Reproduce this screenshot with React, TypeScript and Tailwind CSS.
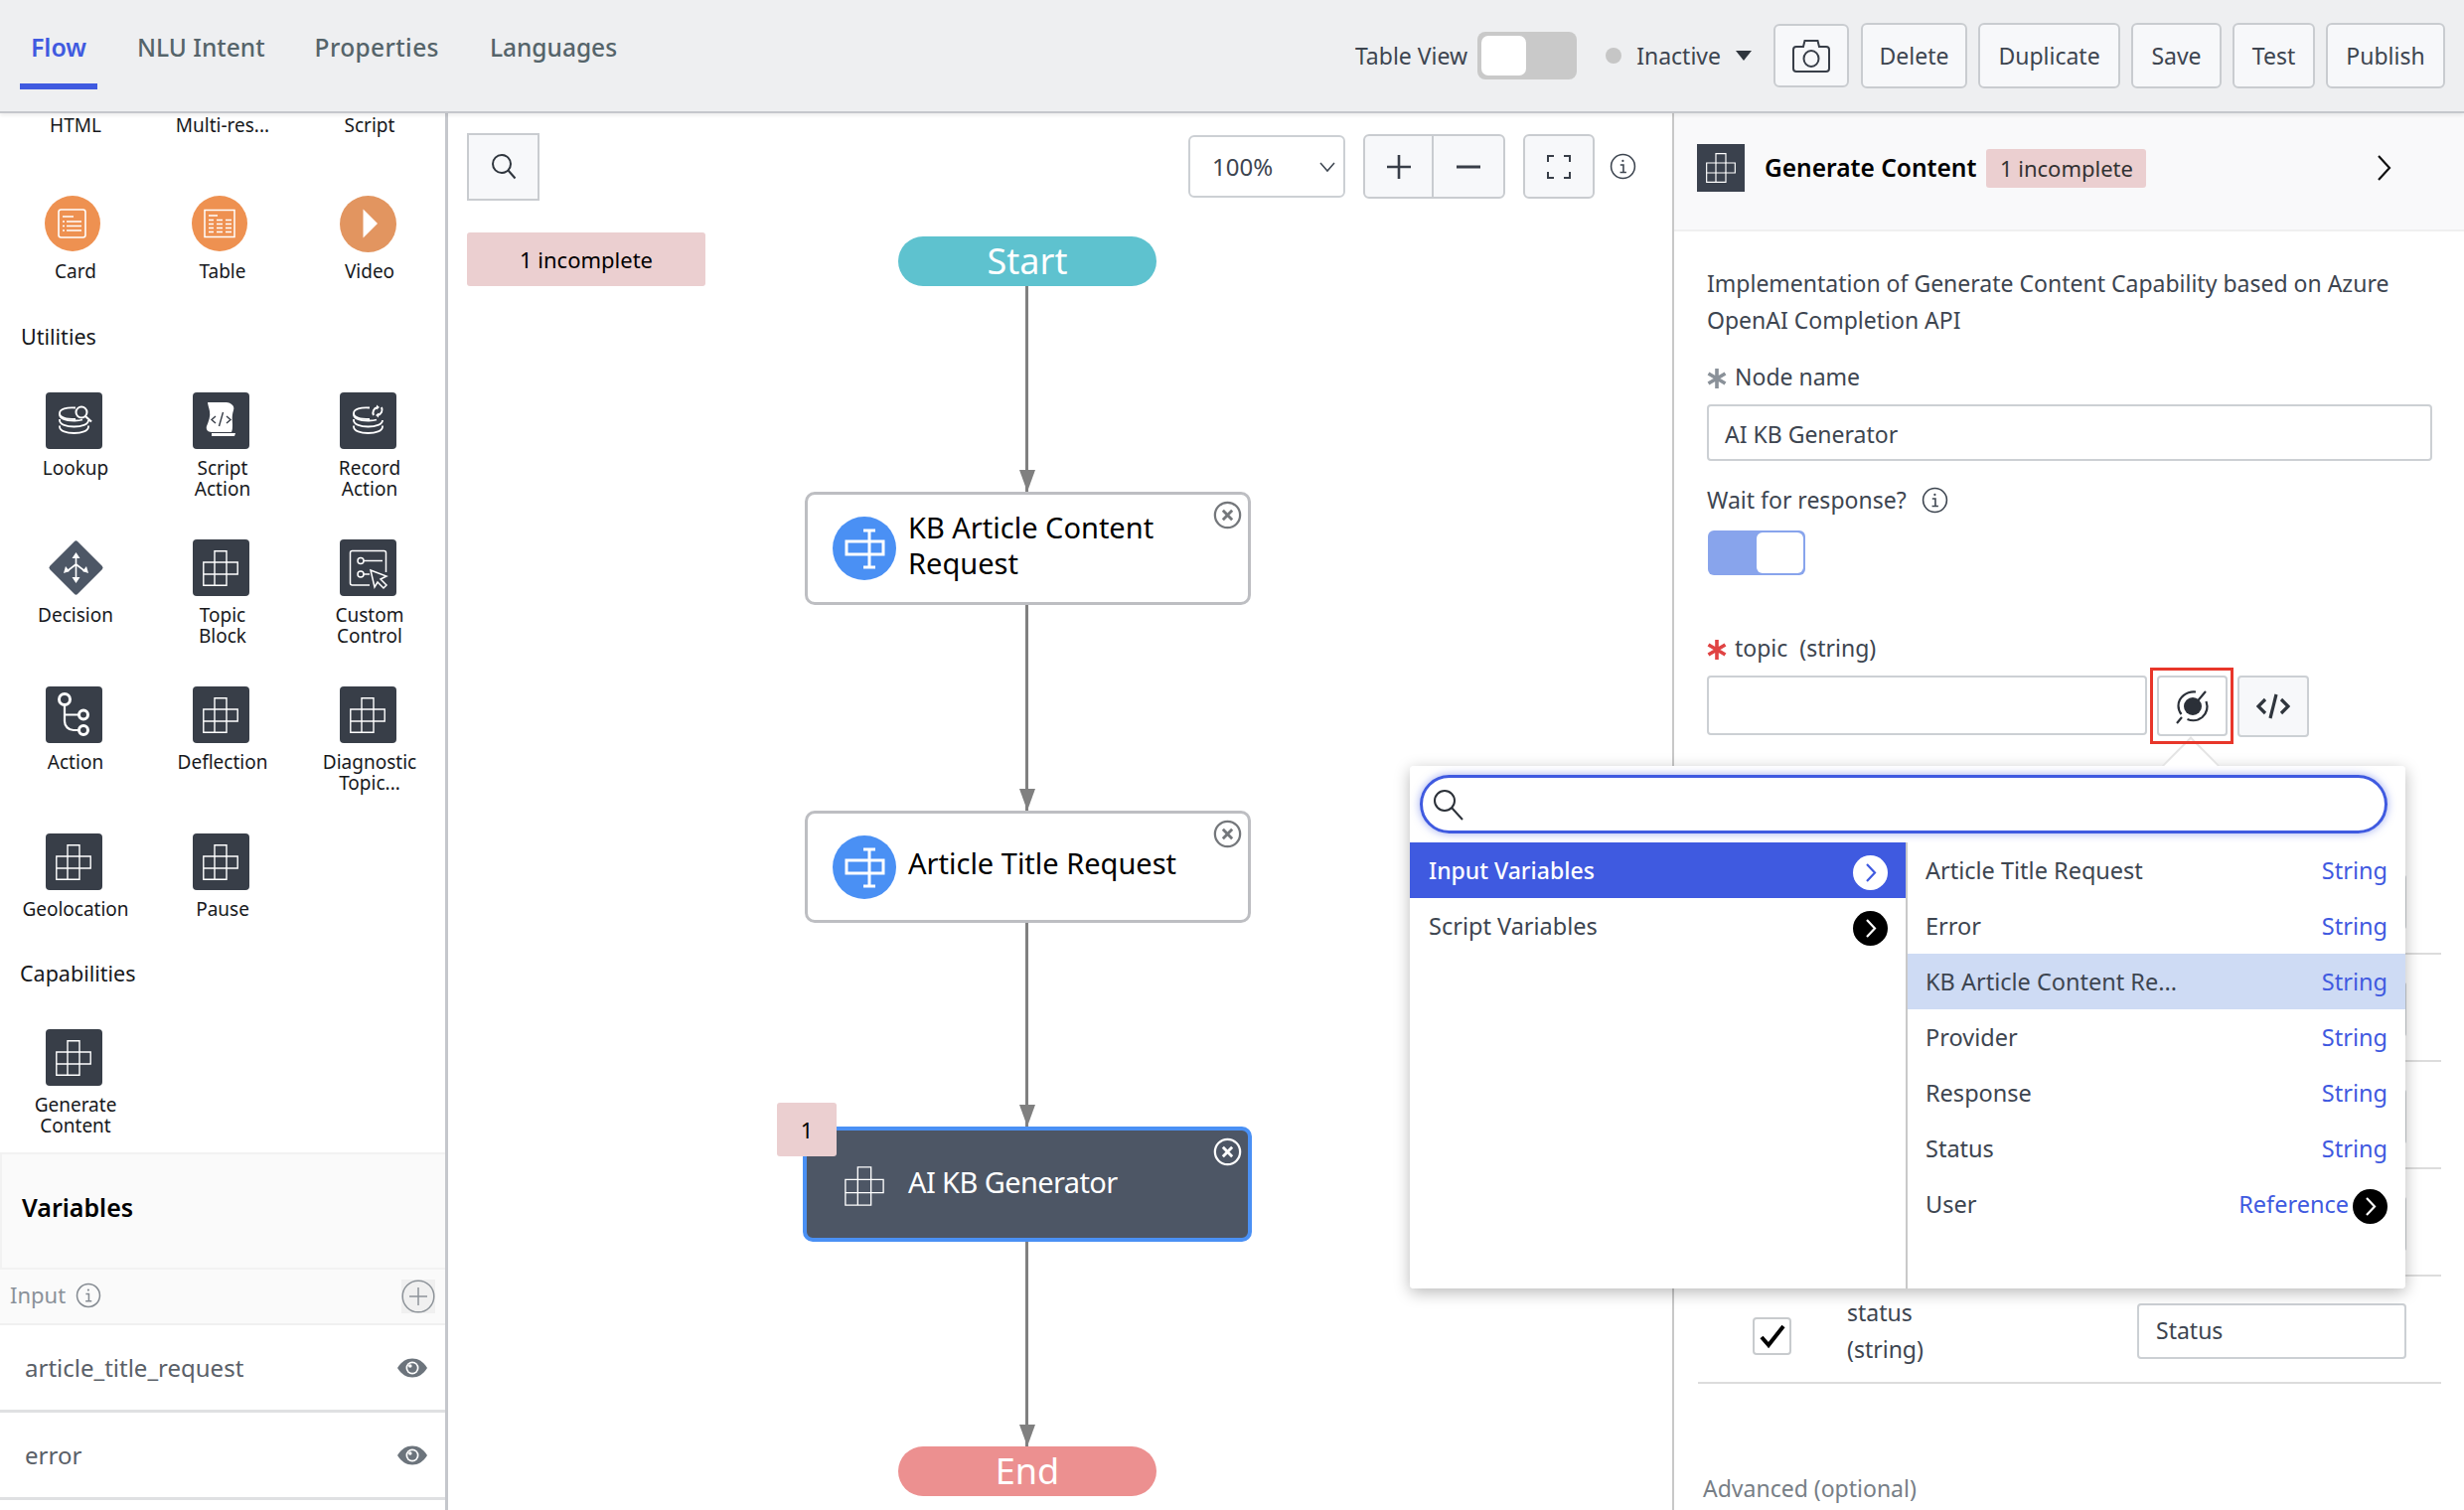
const font = { fontFamily: '"Noto Sans", sans-serif' };

function BlockGlyph({ className, sw = 1.4 }: { className: string; sw?: number }) {
  return (
    <svg viewBox="0 0 36 36" className={className} fill="none" stroke="#fff" strokeWidth={sw}>
      <path d="M12 .8h12V12h11.2v12H24v11.2H.8V12H12z" />
      <path d="M12 12h12v12M.8 24H24M12 12v23.2" />
    </svg>
  );
}

function InfoIcon({ className, color = "#3d4550" }: { className: string; color?: string }) {
  return (
    <svg viewBox="0 0 24 24" className={className} fill="none" stroke={color} strokeWidth="1.4">
      <circle cx="12" cy="12" r="10.6" />
      <path d="M9.6 10.6h2.8v6.6M9.4 17.4h5.6" />
      <circle cx="11.9" cy="7" r="1" fill={color} stroke="none" />
    </svg>
  );
}

function CloseCircle({ className, color = "#74777b" }: { className: string; color?: string }) {
  return (
    <svg viewBox="0 0 28 28" className={className} fill="none" stroke={color}>
      <circle cx="14" cy="14" r="12.2" strokeWidth="2.2" />
      <path d="M9.5 9.5l9 9M18.5 9.5l-9 9" strokeWidth="2.8" />
    </svg>
  );
}

function ChevronDot({ className, bg, fg }: { className: string; bg: string; fg: string }) {
  return (
    <svg viewBox="0 0 35 35" className={className}>
      <circle cx="17.5" cy="17.5" r="17.5" fill={bg} />
      <path d="M14 9l8 8.5-8 8.5" fill="none" stroke={fg} strokeWidth="2.2" />
    </svg>
  );
}

function Asterisk({ color }: { color: string }) {
  return (
    <svg viewBox="0 0 20 20" className="w-[20px] h-[20px] mr-[8px] mt-[4px]" fill="none" stroke={color} strokeWidth="3.6">
      <path d="M10 0v20M1.500 5l17 10M18.500 5l-17 10" />
    </svg>
  );
}

function Eye() {
  return (
    <svg viewBox="0 0 30 20" className="w-[30px] h-[20px]">
      <path d="M0 10C4 3.5 9 .5 15 .5S26 3.5 30 10c-4 6.500-9 9.500-15 9.500S4 16.500 0 10z" fill="#6c747c" />
      <circle cx="15" cy="10" r="6.500" fill="#fff" />
      <circle cx="15" cy="10" r="4.800" fill="#6c747c" />
      <circle cx="12.800" cy="8" r="1.800" fill="#fff" />
    </svg>
  );
}

function NodeGlyph() {
  return (
    <svg viewBox="0 0 64 64" className="w-[64px] h-[64px]">
      <circle cx="32" cy="32" r="32" fill="#4a90f4" />
      <g fill="none" stroke="#fff" strokeWidth="3">
        <rect x="14" y="25" width="37" height="13" />
        <path d="M37 14v37M31 14h12M31 51h12" />
      </g>
    </svg>
  );
}

function DarkBox({ children }: { children: React.ReactNode }) {
  return <div className="w-[57px] h-[57px] rounded-[4px] bg-[#383e48] flex items-center justify-center">{children}</div>;
}

function Block() {
  return (
    <DarkBox>
      <BlockGlyph className="w-[36px] h-[36px]" />
    </DarkBox>
  );
}

function CardIcon() {
  return (
    <svg viewBox="0 0 56 56" className="w-[56px] h-[56px]">
      <circle cx="28" cy="28" r="28" fill="#ee9151" />
      <g fill="none" stroke="#fff">
        <rect x="14" y="14" width="27" height="28" rx="2.500" strokeWidth="1.600" />
        <path d="M18 21h11M18 26h2M22 26h15M18 30.500h2M22 30.500h15M18 35h2M22 35h15" strokeWidth="1.300" />
      </g>
    </svg>
  );
}

function TableIcon() {
  return (
    <svg viewBox="0 0 56 56" className="w-[56px] h-[56px]">
      <circle cx="28" cy="28" r="28" fill="#ee9151" />
      <g fill="none" stroke="#fff">
        <rect x="13" y="14.500" width="30" height="27" strokeWidth="1.500" />
        <path d="M17 20h9M17 24.500h5M25 24.500h6M34 24.500h6M17 28.500h5M25 28.500h6M34 28.500h6M17 32.500h5M25 32.500h6M34 32.500h6M17 36.500h5M25 36.500h6M34 36.500h6" strokeWidth="1.300" />
      </g>
    </svg>
  );
}

function VideoIcon() {
  return (
    <svg viewBox="0 0 57 57" className="w-[57px] h-[57px]">
      <circle cx="28.500" cy="28.500" r="28.500" fill="#e29560" />
      <path d="M23.500 13.500L38 28l-14.500 14.500z" fill="#fff" />
    </svg>
  );
}

function LookupIcon() {
  return (
    <DarkBox>
      <svg viewBox="0 0 57 57" className="w-[57px] h-[57px]" fill="none" stroke="#fff" strokeWidth="1.800">
        <path d="M30 15.500c-9-.8-16 1.500-16 5.500 0 4 7 6 16 6" />
        <path d="M14 21v1c0 4.500 7 6.500 15 6.500 3 0 6-.3 8-1" />
        <path d="M14 27v1c0 4.500 7 6.500 14.500 6.500S43 32.500 43 28" />
        <path d="M14 33.500v1c0 4.500 7 6.500 14.500 6.500S43 39 43 34.500v-1" />
        <circle cx="36" cy="20" r="5.500" strokeWidth="2" />
        <path d="M40 24l6 5.500" strokeWidth="2.200" />
      </svg>
    </DarkBox>
  );
}

function ScriptIcon() {
  return (
    <DarkBox>
      <svg viewBox="0 0 57 57" className="w-[57px] h-[57px]">
        <path d="M15 10h19c3 0 9 3 7 8-2 6-1 10-1 14 0 3 0 6-1 8H19c-4 0-6-3-5-6 2-5 4-10 3-15-.5-3-2-7-2-9z" fill="#fff" />
        <path d="M19 41h24l-1 3H19z" fill="#fff" />
        <path d="M23 24l-4 3.500 4 3.500M34 24l4 3.500-4 3.500M30.500 20l-4 14" fill="none" stroke="#383e48" strokeWidth="1.400" />
      </svg>
    </DarkBox>
  );
}

function RecordIcon() {
  return (
    <DarkBox>
      <svg viewBox="0 0 57 57" className="w-[57px] h-[57px]" fill="none" stroke="#fff" strokeWidth="1.800">
        <path d="M30 15.500c-9-.8-16 1.500-16 5.500 0 4 7 6 16 6" />
        <path d="M14 21v1c0 4.500 7 6.500 15 6.500 3 0 6-.3 8-1" />
        <path d="M14 27v1c0 4.500 7 6.500 14.500 6.500S43 32.500 43 28" />
        <path d="M14 33.500v1c0 4.500 7 6.500 14.500 6.500S43 39 43 34.500v-1" />
        <path d="M34 23c-1.500-3.500 0-7 4-8M42 15c1.500 3.500 0 7-4 8" strokeWidth="2" />
        <path d="M37 12.500l3 2.500-3 2.500zM39 20.500l-3 2.500 3 2.500z" fill="#fff" stroke="none" />
      </svg>
    </DarkBox>
  );
}

function DecisionIcon() {
  return (
    <svg viewBox="0 0 57 57" className="w-[57px] h-[57px]">
      <path d="M28.500 4L53 28.500 28.500 53 4 28.500z" fill="#4d5766" stroke="#4d5766" strokeWidth="5" strokeLinejoin="round" />
      <path d="M28.500 17v23M28.500 25l-9 7M28.500 25l9 7" fill="none" stroke="#fff" strokeWidth="1.600" />
      <path d="M28.500 13l4 6h-8zM28.500 44l-4-6h8zM16 34l2-7 4 5zM41 34l-2-7-4 5z" fill="#fff" />
    </svg>
  );
}

function CustomControlIcon() {
  return (
    <DarkBox>
      <svg viewBox="0 0 57 57" className="w-[57px] h-[57px]" fill="none" stroke="#fff" strokeWidth="1.500">
        <path d="M30 46H12.500a2 2 0 0 1-2-2V13.500a2 2 0 0 1 2-2h32a2 2 0 0 1 2 2V33" />
        <circle cx="21" cy="21.500" r="3" />
        <path d="M24 21.500h19" />
        <circle cx="21" cy="35" r="3" />
        <path d="M24 35h6" />
        <path d="M31 31l16 6-6 3 6 6-3 3-6-6-3 5z" fill="#383e48" />
      </svg>
    </DarkBox>
  );
}

function ActionIcon() {
  return (
    <DarkBox>
      <svg viewBox="0 0 57 57" className="w-[57px] h-[57px]" fill="none" stroke="#fff" strokeWidth="2.200">
        <circle cx="19" cy="13" r="5.500" strokeWidth="3" />
        <circle cx="38" cy="28.500" r="4.500" strokeWidth="3" />
        <circle cx="38" cy="44" r="4.500" strokeWidth="3" />
        <path d="M19 19v16c0 5 4 9 9 9h5M19 28.500h14" />
      </svg>
    </DarkBox>
  );
}

function PaletteItem({ icon, label, iconClass = "mr-[4px]" }: { icon: React.ReactNode; label: string; iconClass?: string }) {
  return (
    <div className="flex flex-col items-center">
      <div className={iconClass}>{icon}</div>
      <div className="mt-[9px] w-[148px] text-center text-[19px] leading-[21px] text-[#16181b] whitespace-pre-line">{label}</div>
    </div>
  );
}

function LeftPanel() {
  return (
    <div className="w-[451px] h-full shrink-0 border-r-[3px] border-[#c5c7cc] flex flex-col overflow-hidden">
      <div className="pl-[2px] h-[83px] pt-[2px] grid grid-cols-[148px_148px_148px] text-center text-[19px] leading-[21px] text-[#16181b]">
        <div>HTML</div>
        <div>Multi-res...</div>
        <div>Script</div>
      </div>
      <div className="pl-[2px] h-[126px] grid grid-cols-[148px_148px_148px]">
        <PaletteItem icon={<CardIcon />} label="Card" iconClass="mr-[6px] h-[57px]" />
        <PaletteItem icon={<TableIcon />} label="Table" iconClass="mr-[7px] h-[57px]" />
        <PaletteItem icon={<VideoIcon />} label="Video" />
      </div>
      <div className="h-[32px] mb-[40px] pl-[21px] text-[21.500px] leading-[32px] text-[#16181b]">Utilities</div>
      <div className="pl-[2px] grid grid-cols-[148px_148px_148px] grid-rows-[148px_148px_148px_125px]">
        <PaletteItem icon={<LookupIcon />} label="Lookup" />
        <PaletteItem icon={<ScriptIcon />} label={"Script\nAction"} />
        <PaletteItem icon={<RecordIcon />} label={"Record\nAction"} />
        <PaletteItem icon={<DecisionIcon />} label="Decision" iconClass="mr-0 h-[57px]" />
        <PaletteItem icon={<Block />} label={"Topic\nBlock"} />
        <PaletteItem icon={<CustomControlIcon />} label={"Custom\nControl"} />
        <PaletteItem icon={<ActionIcon />} label="Action" />
        <PaletteItem icon={<Block />} label="Deflection" />
        <PaletteItem icon={<Block />} label={"Diagnostic\nTopic..."} />
        <PaletteItem icon={<Block />} label="Geolocation" />
        <PaletteItem icon={<Block />} label="Pause" />
      </div>
      <div className="h-[32px] mb-[40px] pl-[20px] text-[21.500px] leading-[32px] text-[#16181b]">Capabilities</div>
      <div className="pl-[2px] h-[124px] grid grid-cols-[148px_148px_148px]">
        <PaletteItem icon={<Block />} label={"Generate\nContent"} />
      </div>
      <div className="h-[118px] shrink-0 bg-[#fafafa] border-y-2 border-l-2 border-[#f2f2f2] flex items-center pl-[20px] text-[25px] font-semibold text-black pb-[7px]">Variables</div>
      <div className="h-[56px] shrink-0 bg-[#fafafa] border-b-2 border-[#f0f0f0] flex items-center pl-[10px] pr-[10px] text-[22px] text-[#8a9199]">
        <span className="-mt-[3px]">Input</span>
        <InfoIcon className="w-[26px] h-[26px] ml-[10px] -mt-[3px]" color="#858b92" />
        <div className="ml-auto w-[34px] h-[34px] bg-[#f0f0f0] flex items-center justify-center">
          <svg viewBox="0 0 34 34" className="w-[34px] h-[34px]" fill="none" stroke="#8d9399" strokeWidth="1.500">
            <circle cx="17" cy="17" r="15.800" />
            <path d="M17 8v18M8 17h18" />
          </svg>
        </div>
      </div>
      {["article_title_request", "error"].map((name) => (
        <div key={name} className="h-[88px] shrink-0 border-b-[3px] border-[#dfe0e2] flex items-center pl-[25px] pr-[18px] text-[24px] text-[#5a6068]">
          <span>{name}</span>
          <span className="ml-auto">
            <Eye />
          </span>
        </div>
      ))}
    </div>
  );
}

function ToolButton({ className, children }: { className: string; children: React.ReactNode }) {
  return <div className={"flex items-center justify-center bg-[#f7f8fa] border-2 border-[#c9ccd0] rounded-[6px] " + className}>{children}</div>;
}

function Connector({ className }: { className: string }) {
  return (
    <div className={"absolute left-[581px] w-[3px] bg-[#808080] " + className}>
      <svg viewBox="0 0 16 22" className="absolute bottom-0 left-[-6.500px] w-[16px] h-[22px]">
        <path d="M0 0h16l-8 22z" fill="#808080" />
      </svg>
    </div>
  );
}

function Canvas() {
  return (
    <div className="relative w-[1234px] h-full shrink-0 border-r-2 border-[#c8c8c8] pt-[20px] pl-[19px] flex flex-col items-start">
      <div className="w-[1195px] flex items-start">
        <div className="w-[73px] h-[68px] bg-[#f7f8fa] border-2 border-[#c9ccd0] flex items-center justify-center">
          <svg viewBox="0 0 32 32" className="w-[32px] h-[32px]" fill="none" stroke="#2f353d" strokeWidth="2">
            <circle cx="14" cy="13" r="9" />
            <path d="M20.500 19.500l7 8" />
          </svg>
        </div>
        <div className="ml-[653px] mt-[2px] w-[158px] h-[63px] bg-white border-2 border-[#ccd0d4] rounded-[6px] flex items-center pl-[22px] text-[24px] text-[#3d4550]">
          <span>100%</span>
          <svg viewBox="0 0 18 12" className="ml-auto mr-[7px] w-[18px] h-[12px]" fill="none" stroke="#3d4550" strokeWidth="1.500">
            <path d="M2 2l7 8 7-8" />
          </svg>
        </div>
        <div className="ml-[18px] mt-[1px] w-[143px] h-[65px] bg-[#f7f8fa] border-2 border-[#c9ccd0] rounded-[6px] flex">
          <div className="w-[69px] h-full border-r-2 border-[#c9ccd0] flex items-center justify-center">
            <svg viewBox="0 0 26 26" className="w-[26px] h-[26px]" stroke="#383e48" strokeWidth="2.600">
              <path d="M13 1v24M1 13h24" />
            </svg>
          </div>
          <div className="flex-1 flex items-center justify-center">
            <svg viewBox="0 0 26 26" className="w-[26px] h-[26px]" stroke="#383e48" strokeWidth="3">
              <path d="M1 13h24" />
            </svg>
          </div>
        </div>
        <ToolButton className="ml-[18px] mt-[1px] w-[72px] h-[65px]">
          <svg viewBox="0 0 24 24" className="w-[24px] h-[24px]" fill="none" stroke="#383e48" strokeWidth="2">
            <path d="M1 7V1h6M17 1h6v6M23 17v6h-6M7 23H1v-6" />
          </svg>
        </ToolButton>
        <InfoIcon className="ml-[15px] mt-[20px] w-[27px] h-[27px]" />
      </div>
      <div className="mt-[32px] w-[240px] h-[54px] rounded-[3px] bg-[#ebcfd0] flex items-center justify-center text-[22px] text-black">1 incomplete</div>

      <div className="absolute left-[453px] top-[124px] w-[260px] h-[50px] rounded-full bg-[#5ec2cf] flex items-center justify-center text-[36px] text-white">Start</div>
      <Connector className="top-[174px] h-[207px]" />
      <div className="absolute left-[359px] top-[381px] w-[449px] h-[114px] rounded-[10px] bg-white border-[3px] border-[#bdbec2] flex items-center pl-[25px]">
        <NodeGlyph />
        <div className="ml-[12px] text-[29px] leading-[36px] text-black w-[300px] -mt-[6px]">KB Article Content Request</div>
        <CloseCircle className="absolute left-[408px] top-[6px] w-[29px] h-[29px]" />
      </div>
      <Connector className="top-[495px] h-[207px]" />
      <div className="absolute left-[359px] top-[702px] w-[449px] h-[113px] rounded-[10px] bg-white border-[3px] border-[#bdbec2] flex items-center pl-[25px]">
        <NodeGlyph />
        <div className="ml-[12px] text-[29px] text-black -mt-[8px]">Article Title Request</div>
        <CloseCircle className="absolute left-[408px] top-[6px] w-[29px] h-[29px]" />
      </div>
      <Connector className="top-[815px] h-[205px]" />
      <div className="absolute left-[357px] top-[1020px] w-[452px] h-[116px] rounded-[10px] bg-[#4d5665] border-4 border-[#4a90f4] flex items-center pl-[38px]">
        <BlockGlyph className="w-[40px] h-[40px] mt-[4px]" sw={1.2} />
        <div className="ml-[24px] text-[29px] tracking-[-0.6px] text-white -mt-[4px]">AI KB Generator</div>
        <CloseCircle className="absolute left-[409px] top-[7px] w-[29px] h-[29px]" color="#fff" />
      </div>
      <div className="absolute left-[331px] top-[996px] w-[60px] h-[54px] rounded-[3px] bg-[#ebcfd0] flex items-center justify-center text-[22px] text-black">1</div>
      <Connector className="top-[1136px] h-[206px]" />
      <div className="absolute left-[453px] top-[1342px] w-[260px] h-[50px] rounded-full bg-[#ec9090] flex items-center justify-center text-[36px] text-white">End</div>
    </div>
  );
}

function OutputRow({ label, type, checked }: { label?: string; type?: string; checked?: boolean }) {
  return (
    <div className="h-[108px] shrink-0 border-b-2 border-[#dcdcdc] flex items-center pr-[35px]">
      <div className="ml-[55px] mt-[13px] w-[39px] h-[38px] rounded-[4px] bg-white border-2 border-[#c8cbce] flex items-center justify-center">
        {checked && (
          <svg viewBox="0 0 28 26" className="w-[28px] h-[26px]" fill="none" stroke="#000" strokeWidth="4">
            <path d="M3 14l7 8L25 3" />
          </svg>
        )}
      </div>
      <div className="ml-[56px] text-[23px] leading-[37px] text-[#3d4550] mt-[3px]">
        {label}
        <br />
        {type}
      </div>
      <div className="ml-auto mt-[3px] w-[271px] h-[56px] bg-white border-2 border-[#ccd0d4] rounded-[4px] flex items-center pl-[17px] text-[23px] text-[#3d4550]">{label === "status" ? "Status" : ""}</div>
    </div>
  );
}

function RightPanel() {
  return (
    <div className="flex-1 h-full flex flex-col overflow-hidden">
      <div className="h-[119px] shrink-0 bg-[#f9f9fa] border-b-2 border-[#f0f0f0] flex items-center pl-[23px] pb-[7px]">
        <div className="w-[48px] h-[48px] bg-[#3a414d] flex items-center justify-center">
          <BlockGlyph className="w-[30px] h-[30px]" />
        </div>
        <div className="ml-[20px] text-[24.500px] font-semibold text-black">Generate Content</div>
        <div className="ml-[10px] w-[161px] h-[39px] rounded-[3px] bg-[#ebcfd0] flex items-center justify-center text-[22px] text-[#333]">1 incomplete</div>
        <svg viewBox="0 0 16 26" className="ml-auto mr-[72px] w-[16px] h-[26px]" fill="none" stroke="#111" strokeWidth="2.200">
          <path d="M2 1l11 12L2 25" />
        </svg>
      </div>
      <div className="pl-[33px] pr-[32px] pt-[34px]">
        <div className="text-[23px] leading-[37px] text-[#3d4550]">
          Implementation of Generate Content Capability based on Azure
          <br />
          OpenAI Completion API
        </div>
        <div className="mt-[21px] h-[34px] flex items-center text-[23px] text-[#3d4550]">
          <Asterisk color="#8a9199" />
          Node name
        </div>
        <div className="mt-[11px] h-[57px] bg-white border-2 border-[#ccd0d4] rounded-[4px] flex items-center pl-[16px] pt-[3px] text-[23px] text-[#3d4550]">AI KB Generator</div>
        <div className="mt-[22px] h-[34px] flex items-center text-[23px] text-[#3d4550]">
          Wait for response?
          <InfoIcon className="ml-[15px] w-[27px] h-[27px]" />
        </div>
        <div className="mt-[14px] ml-[1px] w-[98px] h-[45px] rounded-[6px] bg-[#88a4ec] flex items-center justify-end pr-[2px]">
          <div className="w-[47px] h-[41px] bg-white rounded-[6px]" />
        </div>
        <div className="mt-[56px] h-[34px] flex items-center text-[23px] text-[#3d4550]">
          <Asterisk color="#e04343" />
          topic&nbsp; (string)
        </div>
        <div className="mt-[11px] flex">
          <div className="w-[443px] h-[60px] bg-white border-2 border-[#ccd0d4] rounded-[4px]" />
          <div className="ml-[10px] w-[71px] h-[61px] bg-white border-2 border-[#ccd0d4] rounded-[4px] flex items-center justify-center">
            <svg viewBox="0 0 36 36" className="w-[36px] h-[36px]" fill="none" stroke="#2b3038" strokeWidth="2.200">
              <circle cx="18" cy="18" r="9" fill="#2b3038" stroke="none" />
              <path d="M21 3.500C12 2.500 3.500 9 3.500 17.500c0 3.500 1 6 3 8.500M31.500 13c2 6 .5 12-4 16-4.500 3.500-10 4-15 2" />
              <path d="M20 16L31 3M2 35l5-6" />
            </svg>
          </div>
          <div className="ml-[10px] w-[72px] h-[62px] bg-[#f7f8fa] border-2 border-[#ccd0d4] rounded-[4px] flex items-center justify-center">
            <svg viewBox="0 0 34 28" className="w-[34px] h-[28px]" fill="none" stroke="#2f353d" strokeWidth="3.200">
              <path d="M9 7l-7 7 7 7M25 7l7 7-7 7" />
              <path d="M20 2l-6 24" />
            </svg>
          </div>
        </div>
      </div>
      <div className="mt-[111px] ml-[24px] mr-[23px] flex flex-col">
        <OutputRow />
        <OutputRow />
        <OutputRow />
        <OutputRow />
        <OutputRow label="status" type="(string)" checked />
      </div>
      <div className="mt-[88px] ml-[29px] text-[23px] text-[#777e86]">Advanced (optional)</div>
    </div>
  );
}

const variableRows = [
  { name: "Article Title Request", type: "String" },
  { name: "Error", type: "String" },
  { name: "KB Article Content Re...", type: "String", active: true },
  { name: "Provider", type: "String" },
  { name: "Response", type: "String" },
  { name: "Status", type: "String" },
];

function VariablePopover() {
  return (
    <div className="absolute left-[1419px] top-[771px] w-[1002px] h-[526px] rounded-[4px] shadow-[0_4px_16px_rgba(0,0,0,0.28)] bg-white">
      <div className="absolute left-[765px] -top-[21px] w-[42px] h-[42px] rotate-45 bg-white border-t-2 border-l-2 border-[#e4e4e4]" />
      <div className="relative bg-white rounded-[4px] h-full flex flex-col">
        <div className="ml-[10px] mt-[9px] w-[974px] h-[59px] shrink-0 rounded-full border-[3px] border-[#3f5ae0] shadow-[0_0_8px_rgba(63,90,224,0.5)] flex items-center pl-[9px]">
          <svg viewBox="0 0 34 34" className="w-[34px] h-[34px]" fill="none" stroke="#2b3038" strokeWidth="2">
            <circle cx="13" cy="13" r="10" />
            <path d="M20 20l11 12" />
          </svg>
        </div>
        <div className="mt-[9px] flex-1 flex text-[23.500px] text-[#3d4550]">
          <div className="w-[501px] shrink-0 border-r-2 border-[#c9c9c9]">
            <div className="h-[56px] bg-[#3f5ae0] text-white flex items-center pl-[19px] pr-[18px] pt-[1px] text-[23px] font-medium">
              Input Variables
              <ChevronDot className="ml-auto mt-[4px] w-[35px] h-[35px]" bg="#fff" fg="#3f5ae0" />
            </div>
            <div className="h-[56px] flex items-center pl-[19px] pr-[18px] pt-[1px]">
              Script Variables
              <ChevronDot className="ml-auto mt-[4px] w-[35px] h-[35px]" bg="#000" fg="#fff" />
            </div>
          </div>
          <div className="flex-1 flex flex-col">
            {variableRows.map((row) => (
              <div key={row.name} className={"h-[56px] shrink-0 flex items-center justify-between pl-[18px] pr-[18px] pt-[1px] " + (row.active ? "bg-[#cedbf4]" : "")}>
                <span>{row.name}</span>
                <span className="text-[#3f5ae0]">{row.type}</span>
              </div>
            ))}
            <div className="h-[56px] shrink-0 flex items-center pl-[18px] pr-[18px] pt-[1px]">
              <span>User</span>
              <span className="ml-auto text-[#3f5ae0]">Reference</span>
              <ChevronDot className="ml-[4px] mt-[4px] w-[35px] h-[35px]" bg="#000" fg="#fff" />
            </div>
          </div>
        </div>
      </div>
    </div>
  );
}

function Header() {
  const buttons = [
    { label: "Delete", width: "w-[107px]" },
    { label: "Duplicate", width: "w-[143px]" },
    { label: "Save", width: "w-[91px]" },
    { label: "Test", width: "w-[83px]" },
    { label: "Publish", width: "w-[120px]" },
  ];
  return (
    <div className="relative z-10 h-[114px] shrink-0 bg-[#eeeff1] border-b-2 border-[#c5c7cc] shadow-[0_2px_4px_rgba(0,0,0,0.08)] flex items-start pl-[20px] pr-[19px]">
      <div className="flex">
        <div className="w-[78px] h-[90px] pt-[12px] border-b-[6px] border-[#3f5ae0] flex items-center justify-center text-[25px] font-semibold text-[#3f5ae0]">Flow</div>
        <div className="ml-[40px] flex gap-[50px]">
          <div className="h-[90px] pt-[12px] pb-[6px] flex items-center text-[24.500px] font-medium text-[#55646a]">NLU Intent</div>
          <div className="h-[90px] pt-[12px] pb-[6px] flex items-center text-[24.500px] tracking-[0.4px] font-medium text-[#55646a]">Properties</div>
          <div className="h-[90px] ml-[1px] pt-[12px] pb-[6px] flex items-center text-[24.500px] font-medium text-[#55646a]">Languages</div>
        </div>
      </div>
      <div className="ml-auto h-full flex items-center text-[23px] text-[#3d4550]">
        <span>Table View</span>
        <div className="ml-[10px] w-[100px] h-[48px] rounded-[8px] bg-[#c9c9c9] flex items-center pl-[4px]">
          <div className="w-[45px] h-[40px] bg-white rounded-[7px]" />
        </div>
        <div className="ml-[29px] w-[16px] h-[16px] rounded-full bg-[#c6c6c6]" />
        <span className="ml-[15px]">Inactive</span>
        <svg viewBox="0 0 16 10" className="ml-[15px] w-[16px] h-[10px]">
          <path d="M0 0h16l-8 10z" fill="#2f353d" />
        </svg>
        <ToolButton className="ml-[22px] w-[76px] h-[64px]">
          <svg viewBox="0 0 38 34" className="w-[38px] h-[34px]" fill="none" stroke="#383e48" strokeWidth="2">
            <path d="M4 8h7l1.500-6h13L27 8h7a3 3 0 0 1 3 3v19a3 3 0 0 1-3 3H4a3 3 0 0 1-3-3V11a3 3 0 0 1 3-3z" />
            <ellipse cx="19" cy="20" rx="7.500" ry="8" />
          </svg>
        </ToolButton>
        <div className="ml-[12px] flex gap-[11px]">
          {buttons.map((b) => (
            <ToolButton key={b.label} className={"h-[66px] " + b.width}>
              {b.label}
            </ToolButton>
          ))}
        </div>
      </div>
    </div>
  );
}

export default function App() {
  return (
    <div className="relative w-[2480px] h-[1520px] overflow-hidden bg-white flex flex-col" style={font}>
      <Header />
      <div className="flex-1 min-h-0 flex">
        <LeftPanel />
        <Canvas />
        <RightPanel />
      </div>
      <VariablePopover />
      <div className="absolute left-[2164px] top-[672px] w-[84px] h-[77px] border-[3px] border-[#e8362a]" />
    </div>
  );
}
